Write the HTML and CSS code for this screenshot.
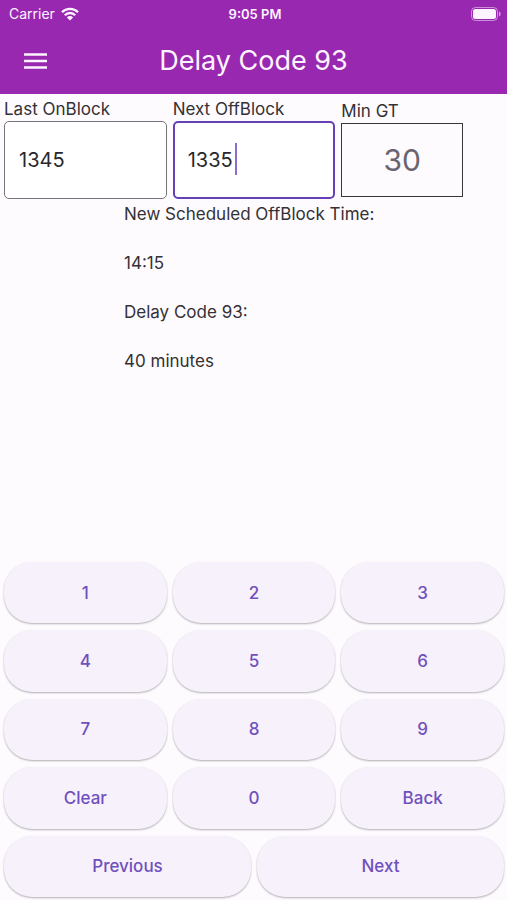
FILE: index.html
```html
<!DOCTYPE html>
<html lang="en">
<head>
  <meta charset="utf-8">
  <meta name="viewport" content="width=device-width, initial-scale=1">
  <title>Delay Code 93</title>
  <link rel="stylesheet" href="styles.css">
</head>
<body>
  <header class="header">
    <div class="status">
      <div class="carrier">
        <span>Carrier</span>
        <svg class="wifi" viewBox="0 0 18 14" aria-hidden="true">
          <path d="M1 5.2a11.3 11.3 0 0 1 16 0M3.8 8.2a7.3 7.3 0 0 1 10.4 0" fill="none" stroke="currentColor" stroke-width="2.3"/>
          <path d="M5.9 10.4a4.4 4.4 0 0 1 6.2 0L9 13.6z" fill="currentColor"/>
        </svg>
      </div>
      <time class="clock">9:05 PM</time>
      <svg class="battery" viewBox="0 0 30 14" aria-hidden="true">
        <rect x=".5" y=".5" width="26" height="13" rx="4" fill="none" stroke="currentColor" stroke-opacity=".5"/>
        <rect x="2" y="2" width="23" height="10" rx="2.5" fill="currentColor"/>
        <path d="M28 4.6c2.2.8 2.2 4 0 4.8z" fill="currentColor" fill-opacity=".6"/>
      </svg>
    </div>
    <div class="appbar">
      <button class="menu" type="button" aria-label="Menu">
        <svg viewBox="0 0 24 16" aria-hidden="true"><path d="M0 1.4h23M0 8h23M0 14.6h23" stroke="currentColor" stroke-width="2.5"/></svg>
      </button>
      <h1 class="title">Delay Code 93</h1>
    </div>
  </header>
  <main class="main">
    <form class="fields">
      <div class="field">
        <label for="last">Last OnBlock</label>
        <input class="box" id="last" type="text" inputmode="numeric" value="1345">
      </div>
      <div class="field">
        <label for="next">Next OffBlock</label>
        <div class="active">
          <input class="box box-active" id="next" type="text" inputmode="numeric" value="1335">
          <span class="caret"></span>
        </div>
      </div>
      <div class="field field-min">
        <label for="min">Min GT</label>
        <input class="min" id="min" type="text" inputmode="numeric" value="30">
      </div>
    </form>
    <section class="result">
      <p>New Scheduled OffBlock Time:</p>
      <p>14:15</p>
      <p>Delay Code 93:</p>
      <p>40 minutes</p>
    </section>
    <div class="keypad">
      <button class="key" type="button">1</button>
      <button class="key" type="button">2</button>
      <button class="key" type="button">3</button>
      <button class="key" type="button">4</button>
      <button class="key" type="button">5</button>
      <button class="key" type="button">6</button>
      <button class="key" type="button">7</button>
      <button class="key" type="button">8</button>
      <button class="key" type="button">9</button>
      <button class="key" type="button">Clear</button>
      <button class="key" type="button">0</button>
      <button class="key" type="button">Back</button>
      <button class="key key-wide" type="button">Previous</button>
      <button class="key key-wide" type="button">Next</button>
    </div>
  </main>
</body>
</html>
```
FILE: styles.css
```css
* {
  box-sizing: border-box;
}

body {
  display: flex;
  flex-direction: column;
  min-height: 100vh;
  margin: 0;
  background: #fefbff;
  color: #333135;
  font-family: Inter, "Liberation Sans", sans-serif;
  font-size: 17px;
  line-height: 24px;
}

button,
input {
  margin: 0;
  font: inherit;
}

.header {
  background: #9828b0;
  color: #fdf4ff;
}

.status {
  display: grid;
  grid-template-columns: 1fr auto 1fr;
  align-items: center;
  height: 27px;
  padding: 0 6px 0 9px;
  font-size: 14px;
}

.carrier {
  display: flex;
  align-items: center;
  gap: 6px;
}

.wifi {
  width: 18px;
  height: 14px;
}

.clock {
  font-size: 13px;
  font-weight: 600;
}

.battery {
  justify-self: end;
  width: 30px;
  height: 14px;
}

.appbar {
  display: grid;
  grid-template-columns: 48px 1fr 48px;
  align-items: center;
  height: 67px;
  padding: 0 12px;
}

.menu {
  display: grid;
  place-items: center;
  width: 48px;
  height: 48px;
  padding: 0;
  border: 0;
  background: none;
  color: inherit;
}

.menu svg {
  width: 24px;
  height: 16px;
}

.title {
  margin: 0;
  font-size: 27px;
  font-weight: 400;
  line-height: 32px;
  text-align: center;
}

.main {
  display: flex;
  flex: 1;
  flex-direction: column;
  padding: 3px 3px 3px 4px;
}

.fields {
  display: grid;
  grid-template-columns: repeat(3, 1fr);
  align-items: center;
  gap: 6px;
}

.field {
  display: flex;
  flex-direction: column;
  min-width: 0;
}

.box {
  width: 100%;
  height: 78px;
  padding: 0 14px;
  border: 1px solid #77747b;
  border-radius: 5px;
  background: #fff;
  color: #29272c;
  font-size: 20px;
}

.box-active {
  display: block;
  padding: 0 13px;
  border: 2px solid #6541b5;
}

.active {
  position: relative;
}

.caret {
  position: absolute;
  top: 22px;
  left: 62px;
  width: 2px;
  height: 32px;
  background: #8d6cd0;
}

.min {
  width: 75%;
  height: 74px;
  padding: 0;
  border: 1px solid #39373b;
  background: transparent;
  color: #69656f;
  font-size: 30px;
  text-align: center;
}

.result {
  display: grid;
  gap: 25px;
  width: 260px;
  margin: 3px auto 0;
}

.result p {
  margin: 0;
  white-space: nowrap;
}

.keypad {
  display: grid;
  grid-template-columns: repeat(6, 1fr);
  grid-auto-rows: 1fr;
  gap: 7px 6px;
  min-height: 335px;
  margin-top: auto;
}

.key {
  grid-column: span 2;
  padding: 0;
  border: 0;
  border-radius: 28px;
  background: #f7f1fc;
  box-shadow: 0 1px 2px #00000040, 0 1px 2px #00000010;
  color: #7050bd;
  font-weight: 500;
}

.key-wide {
  grid-column: span 3;
}
```
